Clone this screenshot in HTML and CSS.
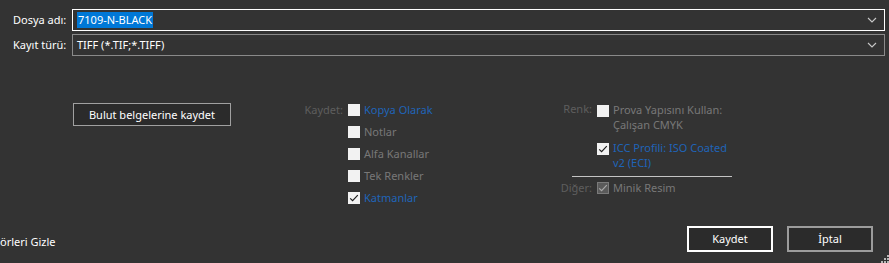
FILE: index.html
```html
<!DOCTYPE html>
<html lang="tr">
<head>
<meta charset="utf-8">
<title>Farklı Kaydet</title>
<link rel="stylesheet" href="styles.css">
</head>
<body>
<div class="dialog">
  <div class="field-row first">
    <span class="field-label">Dosya adı:</span>
    <div class="combo focused">
      <span class="value"><span class="sel">7109-N-BLACK</span></span>
      <svg class="chev" width="10" height="6" viewBox="0 0 10 6"><path d="M1 1 L5 5 L9 1" fill="none" stroke="#c8c8c8" stroke-width="1.1"/></svg>
    </div>
  </div>
  <div class="field-row">
    <span class="field-label">Kayıt türü:</span>
    <div class="combo">
      <span class="value">TIFF (*.TIF;*.TIFF)</span>
      <svg class="chev" width="10" height="6" viewBox="0 0 10 6"><path d="M1 1 L5 5 L9 1" fill="none" stroke="#c8c8c8" stroke-width="1.1"/></svg>
    </div>
  </div>

  <div class="options">
    <div class="cloud-col">
      <button class="btn cloud">Bulut belgelerine kaydet</button>
    </div>

    <div class="group save">
      <div class="row">
        <span class="glabel">Kaydet:</span>
        <span class="cb"></span>
        <span class="otext link">Kopya Olarak</span>
      </div>
      <div class="row">
        <span class="glabel"></span>
        <span class="cb"></span>
        <span class="otext">Notlar</span>
      </div>
      <div class="row">
        <span class="glabel"></span>
        <span class="cb"></span>
        <span class="otext">Alfa Kanallar</span>
      </div>
      <div class="row">
        <span class="glabel"></span>
        <span class="cb"></span>
        <span class="otext">Tek Renkler</span>
      </div>
      <div class="row">
        <span class="glabel"></span>
        <span class="cb checked"><svg width="12" height="12" viewBox="0 0 12 12"><path d="M2.2 6.3 L4.6 8.7 L9.8 3.2" fill="none" stroke="#1e1e1e" stroke-width="1.2"/></svg></span>
        <span class="otext link">Katmanlar</span>
      </div>
    </div>

    <div class="group color">
      <div class="row tall">
        <span class="glabel">Renk:</span>
        <span class="cb"></span>
        <span class="otext multi">Prova Yapısını Kullan:<br>Çalışan CMYK</span>
      </div>
      <div class="row tall second">
        <span class="glabel"></span>
        <span class="cb checked"><svg width="12" height="12" viewBox="0 0 12 12"><path d="M2.2 6.3 L4.6 8.7 L9.8 3.2" fill="none" stroke="#1e1e1e" stroke-width="1.2"/></svg></span>
        <span class="otext multi link">ICC Profili: ISO Coated<br>v2 (ECI)</span>
      </div>
      <div class="sep"></div>
      <div class="row">
        <span class="glabel">Diğer:</span>
        <span class="cb disabled-checked"><svg width="12" height="12" viewBox="0 0 12 12"><path d="M2.2 6.3 L4.6 8.7 L9.8 3.2" fill="none" stroke="#a8a8a8" stroke-width="1.2"/></svg></span>
        <span class="otext">Minik Resim</span>
      </div>
    </div>
  </div>

  <div class="footer">
    <span class="hide-folders">örleri Gizle</span>
    <div class="actions">
      <button class="btn primary">Kaydet</button>
      <button class="btn secondary">İptal</button>
    </div>
  </div>

  <svg class="grip" width="9" height="9" viewBox="0 0 9 9">
    <rect x="7" y="1" width="2" height="2" fill="#b8b8b8"/>
    <rect x="4" y="4" width="2" height="2" fill="#b8b8b8"/>
    <rect x="7" y="4" width="2" height="2" fill="#b8b8b8"/>
    <rect x="1" y="7" width="2" height="2" fill="#b8b8b8"/>
    <rect x="4" y="7" width="2" height="2" fill="#b8b8b8"/>
    <rect x="7" y="7" width="2" height="2" fill="#b8b8b8"/>
  </svg>
</div>
</body>
</html>
```

FILE: styles.css
```css
* { box-sizing: border-box; }

html, body {
  margin: 0;
  padding: 0;
  background: #333333;
}

body {
  width: 889px;
  height: 263px;
  overflow: hidden;
  font-family: "Noto Sans", "Open Sans", sans-serif;
  font-size: 11px;
  color: #ffffff;
}

.dialog {
  position: relative;
  width: 889px;
  height: 263px;
  overflow: hidden;
}

/* top fields */
.field-row {
  display: flex;
  align-items: center;
  height: 22px;
  margin-top: 3px;
}
.field-row.first { margin-top: 9px; }

.field-label {
  width: 72px;
  flex: none;
  padding-left: 13px;
  line-height: 16px;
  color: #ffffff;
  white-space: nowrap;
}

.combo {
  width: 813px;
  height: 22px;
  border: 1px solid #8a8a8a;
  display: flex;
  align-items: center;
  justify-content: space-between;
  padding: 0 7px 0 4px;
}
.combo.focused { border-color: #ffffff; }

.value {
  line-height: 16px;
  white-space: nowrap;
  color: #ffffff;
}
.sel {
  background: #0078d7;
  color: #ffffff;
  padding: 0 1px;
  display: inline-block;
  line-height: 16px;
}

.chev { display: block; }

/* options area */
.options {
  display: flex;
  align-items: flex-start;
  padding-top: 43px;
  padding-left: 73px;
  height: 153px;
}

.cloud-col {
  width: 158px;
  flex: none;
  padding-top: 4px;
}

.btn {
  font-family: inherit;
  font-size: 11px;
  color: #ffffff;
  background: #2b2b2b;
  margin: 0;
  padding: 0;
  cursor: default;
}

.cloud {
  width: 158px;
  height: 23px;
  border: 1px solid #a0a0a0;
  line-height: 16px;
}

.group { display: flex; flex-direction: column; flex: none; }
.group.save { width: 200px; }
.group.color { width: 300px; }

.row {
  display: flex;
  align-items: center;
  height: 22px;
}

.glabel {
  flex: none;
  text-align: right;
  padding-right: 5px;
  color: #5e5e5e;
  line-height: 16px;
  white-space: nowrap;
}
.save .glabel { width: 117px; }
.color .glabel { width: 166px; }

.cb {
  width: 12px;
  height: 12px;
  background: #f2f2f2;
  flex: none;
  display: block;
}
.cb svg { display: block; }
.cb.disabled-checked {
  background: #5a5a5a;
  border: 1px solid #7a7a7a;
}
.cb.disabled-checked svg { margin: -1px; }

.otext {
  flex: none;
  margin-left: 4px;
  color: #787878;
  line-height: 16px;
  white-space: nowrap;
}
.otext.link { color: #1f64b8; }

.row.tall {
  height: auto;
  align-items: flex-start;
}
.row.tall .glabel { padding-top: 2px; }
.row.tall .cb { margin-top: 6px; }
.row.tall .otext { padding-top: 3px; line-height: 15px; }
.row.tall.second { margin-top: 5px; }

.sep {
  margin-top: 6px;
  margin-left: 141px;
  width: 160px;
  height: 1px;
  background: #c4c4c4;
}

/* footer */
.footer {
  display: flex;
  justify-content: space-between;
  align-items: flex-start;
  margin-top: 17px;
  padding-right: 16px;
}

.hide-folders {
  padding-top: 8px;
  line-height: 16px;
  color: #ffffff;
  white-space: nowrap;
}

.actions {
  display: flex;
  gap: 14px;
}

.primary, .secondary {
  width: 86px;
  height: 26px;
  line-height: 16px;
}
.primary { border: 2px solid #ffffff; }
.secondary { border: 2px solid #9c9c9c; }

.grip {
  position: absolute;
  right: 0;
  bottom: 0;
  display: block;
}
```
